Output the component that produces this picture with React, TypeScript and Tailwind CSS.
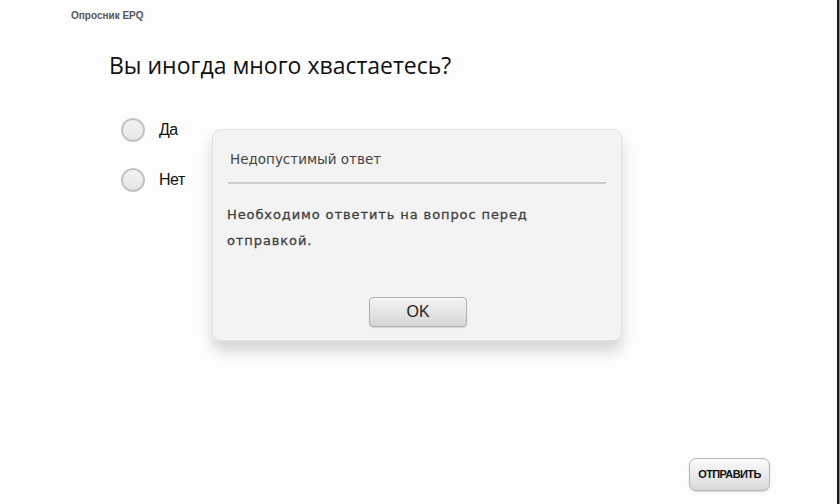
import React from "react";

export default function App() {
  return (
    <div className="relative flex h-[504px] w-[840px] overflow-hidden bg-[#fdfdfd]" style={{ fontFamily: '"Liberation Sans", Arial, sans-serif' }}>
      <div className="flex flex-1 flex-col">
        <div className="pl-[71px] pt-[9px] text-[10px] font-bold leading-[14px] text-[#555]">Опросник EPQ</div>
        <div className="pl-[109px] pt-[27px] text-[23px] leading-[30px] text-[#111]" style={{ fontFamily: '"Open Sans", "Noto Sans", sans-serif' }}>
          Вы иногда много хвастаетесь?
        </div>
        <div className="flex flex-col gap-[26px] pl-[121px] pt-[38px]">
          {["Да", "Нет"].map((t) => (
            <div key={t} className="flex items-center gap-[14px]">
              <div className="h-[24px] w-[24px] rounded-full border-2 border-[#c4c4c4] bg-gradient-to-b from-[#f2f2f2] to-[#e6e6e6]" />
              <span className="text-[16px] tracking-[-0.5px] text-[#111]">{t}</span>
            </div>
          ))}
        </div>
        <div className="mt-auto flex justify-end pb-[13px] pr-[67px]">
          <button className="flex h-[33px] w-[81px] items-center justify-center rounded-[7px] border border-[#b5b5b5] bg-gradient-to-b from-[#fbfbfb] to-[#d9d9d9] text-[11px] font-bold tracking-[-0.6px] text-[#111] shadow-[0_1px_2px_rgba(0,0,0,0.15)]">
            ОТПРАВИТЬ
          </button>
        </div>
      </div>
      <div className="w-[2px] bg-[#1c1c1c]" />
      <div className="w-[1px] bg-[#8a8a8a]" />

      <div className="absolute left-[212px] top-[129px] flex h-[212px] w-[410px] flex-col rounded-[9px] border border-[#e2e2e2] bg-[#f3f3f3] shadow-[0_10px_14px_rgba(0,0,0,0.16)]">
        <div className="pl-[17px] pt-[19px] text-[13.5px] leading-[20px] text-[#444]" style={{ fontFamily: '"DejaVu Sans", Verdana, sans-serif' }}>Недопустимый ответ</div>
        <div className="mx-[15px] mt-[13px] h-[2px] bg-[#cfcfcf]" />
        <div className="px-[14px] pt-[18px] text-[13px] leading-[26px] tracking-[0.9px] text-[#3f3f3f]" style={{ fontFamily: '"DejaVu Sans", Verdana, sans-serif', WebkitTextStroke: "0.3px #3f3f3f" }}>
          Необходимо ответить на вопрос перед
          <br />
          отправкой.
        </div>
        <div className="mt-auto flex justify-center pb-[13px] pl-[2px]">
          <button className="flex h-[30px] w-[98px] items-center justify-center rounded-[4px] border border-[#b0b0b0] bg-gradient-to-b from-[#f4f4f4] to-[#d6d6d6] text-[16px] text-[#222] shadow-[0_1px_1px_rgba(0,0,0,0.12)]">
            OK
          </button>
        </div>
      </div>
    </div>
  );
}
